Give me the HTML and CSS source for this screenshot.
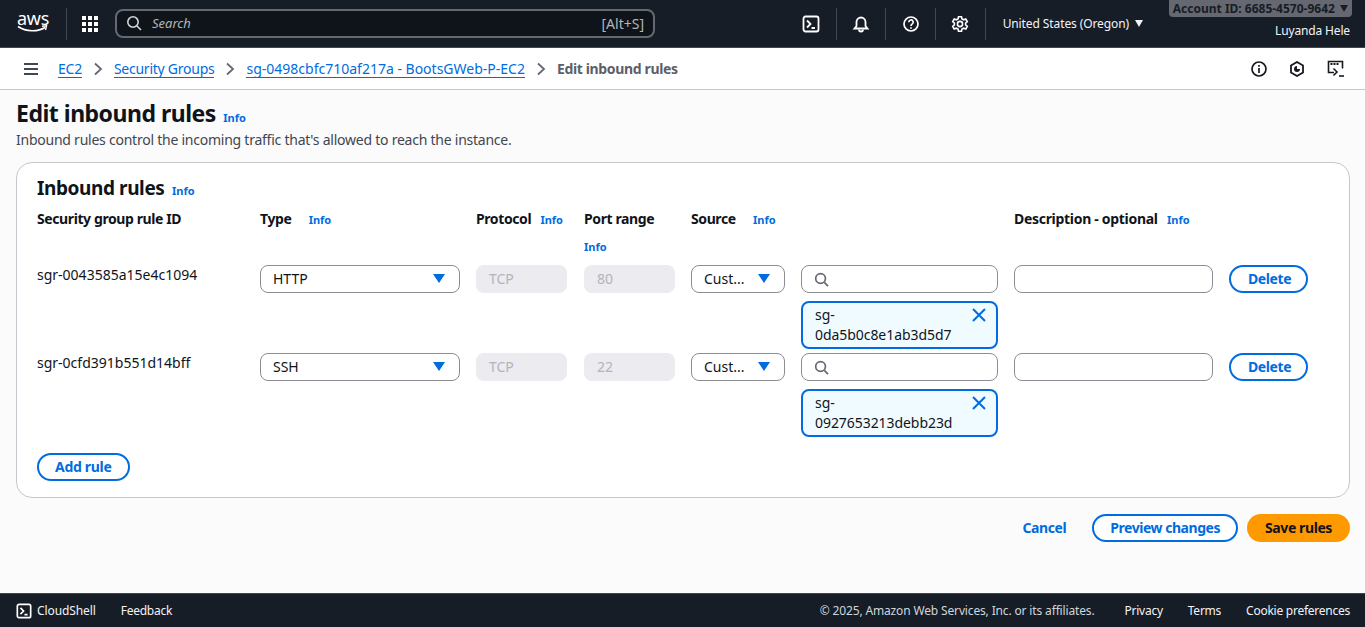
FILE: index.html
```html
<!DOCTYPE html>
<html lang="en">
<head>
  <meta charset="UTF-8" />
  <title>Edit inbound rules</title>
  <link rel="stylesheet" href="styles.css">
</head>
<body>

<header class="topbar">
  <div class="logo">
    <span class="logo-text">aws</span>
    <svg width="32" height="8" viewBox="0 0 32 8"><path d="M1 1.500C9 7 21 7 28 2.500" fill="none" stroke="#fff" stroke-width="1.600"/><path d="M25 1.200l4.500-.4-1 4.200" fill="none" stroke="#fff" stroke-width="1.400"/></svg>
  </div>
  <span class="top-sep"></span>
  <svg class="apps" width="16" height="16" viewBox="0 0 16 16" fill="#fff"><rect x="0" y="0" width="4" height="4"/><rect x="6" y="0" width="4" height="4"/><rect x="12" y="0" width="4" height="4"/><rect x="0" y="6" width="4" height="4"/><rect x="6" y="6" width="4" height="4"/><rect x="12" y="6" width="4" height="4"/><rect x="0" y="12" width="4" height="4"/><rect x="6" y="12" width="4" height="4"/><rect x="12" y="12" width="4" height="4"/></svg>
  <div class="search">
    <svg width="16" height="16" viewBox="0 0 16 16" fill="none" stroke="#d1d5db" stroke-width="1.600"><circle cx="7" cy="7" r="5.200"/><path d="M11 11l4 4"/></svg>
    <span class="search-text">Search</span>
    <span class="search-key">[Alt+S]</span>
  </div>
  <div class="top-icons">
    <span class="top-icon">
      <svg width="18" height="18" viewBox="0 0 18 18" fill="none" stroke="#fff" stroke-width="1.800"><rect x="1.500" y="1.500" width="15" height="15" rx="2"/><path d="M5 5.500l3.500 3.500L5 12.500M9.500 13H13"/></svg>
    </span>
    <span class="top-sep"></span>
    <span class="top-icon">
      <svg width="18" height="18" viewBox="0 0 18 18" fill="none" stroke="#fff" stroke-width="1.800"><path d="M2.500 13.500h13l-2-2.500V7a4.500 4.500 0 0 0-9 0v4z"/><path d="M7 14.500a2 2 0 0 0 4 0"/></svg>
    </span>
    <span class="top-sep"></span>
    <span class="top-icon">
      <svg width="18" height="18" viewBox="0 0 18 18" fill="none" stroke="#fff" stroke-width="1.700"><circle cx="9" cy="9" r="7"/><path d="M6.800 7.200a2.200 2.200 0 1 1 3.300 1.900c-.8.500-1.100.9-1.100 1.800"/><path d="M9 12.200v1.500"/></svg>
    </span>
    <span class="top-sep"></span>
    <span class="top-icon">
      <svg width="18" height="18" viewBox="0 0 18 18" fill="none" stroke="#fff" stroke-width="1.600"><path d="M7.500 1.700h3l.5 2.200 1.700.9 2.100-.8 1.500 2.600-1.700 1.500v1.800l1.700 1.500-1.500 2.600-2.100-.8-1.700.9-.5 2.200h-3l-.5-2.200-1.700-.9-2.100.8-1.500-2.600 1.700-1.500v-1.800L1.700 6.600l1.500-2.600 2.100.8L7 3.900z"/><circle cx="9" cy="9" r="2.600"/></svg>
    </span>
    <span class="top-sep"></span>
  </div>
  <div class="region">United States (Oregon) <span class="caret caret-white"></span></div>
  <div class="account">
    <div class="account-id">Account ID: 6685-4570-9642 <span class="caret caret-dark"></span></div>
    <div class="user">Luyanda Hele</div>
  </div>
</header>

<nav class="crumbbar">
  <svg class="burger" width="16" height="14" viewBox="0 0 16 14" fill="none" stroke="#424650" stroke-width="2"><path d="M1 2h14M1 7h14M1 12h14"/></svg>
  <a class="crumb" href="#">EC2</a>
  <svg class="chev" width="10" height="14" viewBox="0 0 10 14" fill="none" stroke="#656871" stroke-width="1.800"><path d="M2 1.500L8 7l-6 5.500"/></svg>
  <a class="crumb" href="#">Security Groups</a>
  <svg class="chev" width="10" height="14" viewBox="0 0 10 14" fill="none" stroke="#656871" stroke-width="1.800"><path d="M2 1.500L8 7l-6 5.500"/></svg>
  <a class="crumb crumb-id" href="#">sg-0498cbfc710af217a - BootsGWeb-P-EC2</a>
  <svg class="chev" width="10" height="14" viewBox="0 0 10 14" fill="none" stroke="#656871" stroke-width="1.800"><path d="M2 1.500L8 7l-6 5.500"/></svg>
  <span class="crumb-current">Edit inbound rules</span>
  <div class="crumb-tools">
    <svg width="16" height="16" viewBox="0 0 16 16" fill="none" stroke="#16191f" stroke-width="1.700"><circle cx="8" cy="8" r="7"/><path d="M8 7v5M8 4v1.800"/></svg>
    <svg width="16" height="16" viewBox="0 0 16 16" fill="none" stroke="#16191f" stroke-width="1.800"><path d="M8 1l6 3.500v7L8 15l-6-3.500v-7z"/><path d="M8 5a3 3 0 1 0 3 3H8z" fill="#16191f" stroke="none"/></svg>
    <svg width="18" height="18" viewBox="0 0 18 18" fill="none" stroke="#16191f" stroke-width="1.600"><path d="M7 12.500H1.500v-11h14v7"/><path d="M3.500 4h9" stroke-width="2" stroke-dasharray="2 1"/><path d="M6.500 8.500L10 12l-3.500 3.500"/><path d="M12 16h5"/></svg>
  </div>
</nav>

<main class="content">
  <h1 class="page-title">Edit inbound rules <a class="info info-title" href="#">Info</a></h1>
  <p class="page-desc">Inbound rules control the incoming traffic that's allowed to reach the instance.</p>

  <section class="card">
    <h2 class="card-title">Inbound rules <a class="info" href="#">Info</a></h2>

    <div class="rules-grid">
      <div class="head">Security group rule ID</div>
      <div class="head">Type <a class="info info-wide" href="#">Info</a></div>
      <div class="head">Protocol <a class="info" href="#">Info</a></div>
      <div class="head head-port">Port range <a class="info info-block" href="#">Info</a></div>
      <div class="head">Source <a class="info info-wide" href="#">Info</a></div>
      <div class="head"></div>
      <div class="head head-desc">Description - optional <a class="info" href="#">Info</a></div>
      <div class="head"></div>

      <div class="rule-id">sgr-0043585a15e4c1094</div>
      <div class="select"><span>HTTP</span><span class="arrow"></span></div>
      <div class="disabled">TCP</div>
      <div class="disabled">80</div>
      <div class="select select-small"><span>Cust...</span><span class="arrow"></span></div>
      <div class="source-col">
        <div class="field">
          <svg width="15" height="15" viewBox="0 0 16 16" fill="none" stroke="#656871" stroke-width="1.800"><circle cx="7" cy="7" r="5.200"/><path d="M11 11l4 4"/></svg>
        </div>
        <div class="chip">
          <span>sg-<br>0da5b0c8e1ab3d5d7</span>
          <svg width="16" height="16" viewBox="0 0 16 16" fill="none" stroke="#006ce0" stroke-width="2"><path d="M2 2l12 12M14 2L2 14"/></svg>
        </div>
      </div>
      <div class="field"></div>
      <button class="btn btn-line">Delete</button>

      <div class="rule-id">sgr-0cfd391b551d14bff</div>
      <div class="select"><span>SSH</span><span class="arrow"></span></div>
      <div class="disabled">TCP</div>
      <div class="disabled">22</div>
      <div class="select select-small"><span>Cust...</span><span class="arrow"></span></div>
      <div class="source-col">
        <div class="field">
          <svg width="15" height="15" viewBox="0 0 16 16" fill="none" stroke="#656871" stroke-width="1.800"><circle cx="7" cy="7" r="5.200"/><path d="M11 11l4 4"/></svg>
        </div>
        <div class="chip">
          <span>sg-<br>0927653213debb23d</span>
          <svg width="16" height="16" viewBox="0 0 16 16" fill="none" stroke="#006ce0" stroke-width="2"><path d="M2 2l12 12M14 2L2 14"/></svg>
        </div>
      </div>
      <div class="field"></div>
      <button class="btn btn-line">Delete</button>
    </div>

    <button class="btn btn-line btn-add">Add rule</button>
  </section>

  <div class="actions">
    <a class="cancel" href="#">Cancel</a>
    <button class="btn btn-line">Preview changes</button>
    <button class="btn btn-save">Save rules</button>
  </div>
</main>

<footer class="footer">
  <svg width="16" height="16" viewBox="0 0 18 18" fill="none" stroke="#fff" stroke-width="1.900"><rect x="1.500" y="1.500" width="15" height="15" rx="2"/><path d="M5 5.500l3.500 3.500L5 12.500M9.500 13H13"/></svg>
  <span class="foot-shell">CloudShell</span>
  <span class="foot-link">Feedback</span>
  <div class="foot-right">
    <span class="copyright">&copy; 2025, Amazon Web Services, Inc. or its affiliates.</span>
    <span class="foot-link">Privacy</span>
    <span class="foot-link">Terms</span>
    <span class="foot-link">Cookie preferences</span>
  </div>
</footer>

</body>
</html>
```

FILE: styles.css
```css
* {
  box-sizing: border-box;
}

html, body {
  height: 100%;
}

body {
  margin: 0;
  height: 627px;
  overflow: hidden;
  display: flex;
  flex-direction: column;
  font-family: "Noto Sans", "Open Sans", sans-serif;
  font-size: 14px;
  color: #0f141a;
  background: #fbfbfb;
}

a {
  color: #006ce0;
  text-decoration: none;
}

/* top navigation */
.topbar {
  height: 48px;
  flex: none;
  display: flex;
  align-items: center;
  padding-left: 16px;
  background: #161d26;
  border-bottom: 1px solid #414750;
  color: #fff;
}

.logo {
  width: 34px;
  margin-right: 16px;
  display: flex;
  flex-direction: column;
  align-items: center;
  margin-top: -3px;
}

.logo-text {
  font-size: 18px;
  line-height: 15px;
  letter-spacing: -0.3px;
}

.logo svg {
  margin-top: -1px;
}

.top-sep {
  width: 1px;
  height: 32px;
  background: #424650;
}

.apps {
  margin-left: 15px;
}

.search {
  width: 540px;
  height: 29px;
  margin-left: 17px;
  padding: 0 9px 1px 9px;
  display: flex;
  align-items: center;
  background: #0f141a;
  border: 2px solid #656871;
  border-radius: 8px;
}

.search-text {
  margin-left: 10px;
  font-size: 13px;
  font-style: italic;
  color: #b4b4bb;
}

.search-key {
  margin-left: auto;
  color: #b4b4bb;
}

.top-icons {
  margin-left: 132px;
  display: flex;
  align-items: center;
}

.top-icon {
  width: 48.67px;
  height: 32px;
  display: flex;
  align-items: center;
  justify-content: center;
}

.region {
  margin-left: 17px;
  font-size: 12px;
  color: #f3f3f7;
  letter-spacing: -0.1px;
  white-space: nowrap;
}

.caret {
  display: inline-block;
  border-left: 4.5px solid transparent;
  border-right: 4.5px solid transparent;
  border-top: 7px solid #f3f3f7;
}

.caret-white {
  margin-left: 3px;
  vertical-align: 1px;
}

.caret-dark {
  margin-left: 2px;
  border-top-color: #161d26;
  vertical-align: 1px;
}

.account {
  margin-left: auto;
  margin-right: 13px;
  align-self: flex-start;
  display: flex;
  flex-direction: column;
  align-items: flex-end;
}

.account-id {
  height: 17px;
  padding: 0 4px;
  background: #656871;
  color: #161d26;
  border-radius: 0 0 4px 4px;
  font-size: 12px;
  font-weight: 700;
  line-height: 17px;
  white-space: nowrap;
}

.user {
  margin-top: 5px;
  padding-right: 2px;
  font-size: 12px;
  line-height: 18px;
  letter-spacing: -0.15px;
  color: #f3f3f7;
}

/* breadcrumbs */
.crumbbar {
  height: 42px;
  flex: none;
  display: flex;
  align-items: center;
  padding: 0 20px 0 23px;
  background: #fff;
  border-bottom: 1px solid #c6c6cd;
}

.burger {
  margin-right: 19px;
}

.crumb {
  border-bottom: 1px solid #006ce0;
  line-height: 17px;
  letter-spacing: -0.25px;
}

.crumb-id {
  letter-spacing: 0;
}

.chev {
  margin: 0 11px;
}

.crumb-current {
  font-weight: 700;
  letter-spacing: -0.35px;
  color: #5b5f69;
}

.crumb-tools {
  margin-left: auto;
  display: flex;
  align-items: center;
  gap: 22px;
}

/* page */
.content {
  flex: 1;
  padding: 0 15px 0 16px;
}

.page-title {
  margin: 7px 0 0;
  font-size: 23px;
  line-height: 32px;
  font-weight: 700;
  letter-spacing: -0.5px;
}

.info {
  font-size: 11px;
  line-height: 1;
  font-weight: 700;
  letter-spacing: 0;
}

.info-title {
  margin-left: 2px;
}

.page-desc {
  margin: 1px 0 0;
  line-height: 20px;
  letter-spacing: -0.24px;
  color: #424650;
}

.card {
  height: 336px;
  margin-top: 12px;
  padding: 12px 20px;
  background: #fff;
  border: 1px solid #c6c6cd;
  border-radius: 16px;
}

.card-title {
  margin: 0;
  font-size: 19px;
  line-height: 26px;
  font-weight: 700;
  letter-spacing: -0.4px;
}

.card-title .info {
  margin-left: 3px;
}

.rules-grid {
  margin-top: 6px;
  display: grid;
  grid-template-columns: 207px 200px 92px 91px 94px 197px 199px 79px;
  column-gap: 16px;
}

.head {
  height: 58px;
  padding-top: 3px;
  font-weight: 700;
  line-height: 18px;
  letter-spacing: -0.4px;
  white-space: nowrap;
}

.head-desc {
  letter-spacing: -0.3px;
}

.info-wide {
  margin-left: 14px;
}

.head:not(.head-port) .info:not(.info-wide) {
  margin-left: 6px;
}

.info-block {
  display: block;
  margin-top: 13px;
}

.rule-id {
  padding-top: 1px;
  line-height: 18px;
}

.select, .field, .disabled {
  height: 28px;
  border-radius: 8px;
}

.select {
  display: flex;
  align-items: center;
  justify-content: space-between;
  padding: 0 14px 1px 12px;
  background: #fff;
  border: 1px solid #8c8c94;
}

.arrow {
  border-left: 6px solid transparent;
  border-right: 6px solid transparent;
  border-top: 9px solid #006ce0;
}

.disabled {
  width: 91px;
  display: flex;
  align-items: center;
  padding: 0 0 1px 13px;
  background: #ebebf0;
  color: #b4b4bb;
}

.field {
  display: flex;
  align-items: center;
  padding-left: 12px;
  background: #fff;
  border: 1px solid #8c8c94;
}

.source-col {
  display: flex;
  flex-direction: column;
  gap: 8px;
  margin-bottom: 4px;
}

.chip {
  height: 48px;
  display: flex;
  justify-content: space-between;
  padding: 2px 9px 0 12px;
  background: #f0fbff;
  border: 2px solid #006ce0;
  border-radius: 8px;
  line-height: 20px;
  letter-spacing: -0.06px;
}

.chip svg {
  margin-top: 2px;
}

.btn {
  height: 28px;
  padding: 0 17px 1px;
  font: inherit;
  font-weight: 700;
  letter-spacing: -0.4px;
  border-radius: 20px;
  white-space: nowrap;
}

.btn-line {
  background: #fff;
  color: #006ce0;
  border: 2px solid #006ce0;
}

.btn-add {
  margin-top: 12px;
  padding: 0 16px 1px;
  letter-spacing: -0.3px;
}

.actions {
  margin-top: 16px;
  display: flex;
  justify-content: flex-end;
  align-items: center;
  gap: 9px;
}

.actions .btn-line {
  padding: 0 16px 1px;
  letter-spacing: -0.47px;
}

.cancel {
  margin-right: 17px;
  margin-bottom: 1px;
  font-weight: 700;
  letter-spacing: -0.4px;
}

.btn-save {
  padding: 0 18px 1px;
  background: #ff9900;
  color: #0f141a;
  border: none;
}

/* footer */
.footer {
  height: 34px;
  flex: none;
  display: flex;
  align-items: center;
  padding: 0 15px 0 16px;
  background: #161d26;
  border-top: 1px solid #414750;
  font-size: 12px;
  letter-spacing: -0.25px;
  color: #f3f3f7;
}

.foot-shell {
  margin-left: 5px;
  letter-spacing: -0.1px;
}

.foot-shell + .foot-link {
  margin-left: 25px;
}

.foot-right {
  margin-left: auto;
  display: flex;
  gap: 25px;
}

.copyright {
  margin-right: 5px;
  letter-spacing: -0.15px;
  color: #d1d5db;
}
```
